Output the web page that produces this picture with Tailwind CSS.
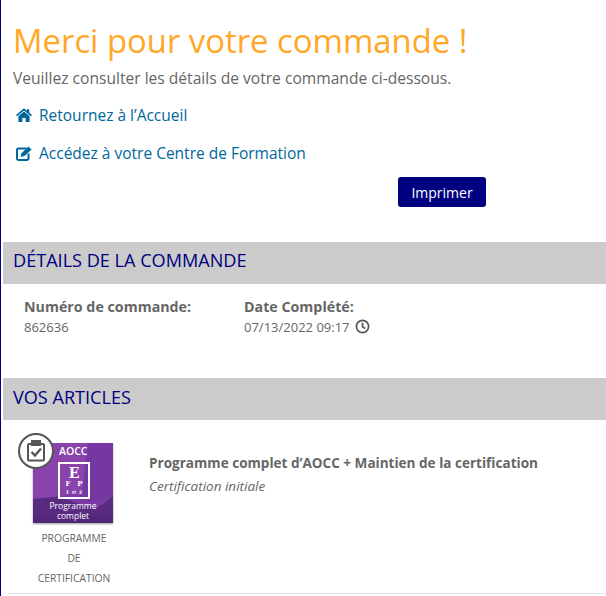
<!DOCTYPE html>
<html lang="fr">
<head>
    <meta charset="UTF-8">
    <title>Merci pour votre commande</title>
    <script src="https://cdn.jsdelivr.net/npm/@tailwindcss/browser@4"></script>
</head>
<body class="bg-white font-['Open_Sans',sans-serif] text-[#666] overflow-hidden">
    <div class="h-[596px] overflow-hidden border-l border-[#000080] pl-[2px]">
        <!-- Heading and links -->
        <div class="pl-[10px] pt-[18px]">
            <h1 class="text-[32.85px] leading-[46px] text-[#ffa726] font-medium">Merci pour votre commande !</h1>
            <p class="mt-[3px] text-[15.6px] leading-[22px]">Veuillez consulter les détails de votre commande ci-dessous.</p>
            <a class="mt-[15px] flex items-center text-[15.5px] leading-[22px] text-[#00679b]">
                <svg class="ml-[3px] mr-[7px] w-[16px] h-[14px]" viewBox="0 0 16 14" fill="#00679b"><path d="M8 0.3 L11 2.8 V1.2 H13.2 V4.6 L16 7 L15 8.2 L8 2.4 L1 8.2 L0 7 Z M8 3.4 L13.6 8 V13.2 A0.8 0.8 0 0 1 12.8 14 H9.6 V10 H6.4 V14 H3.2 A0.8 0.8 0 0 1 2.4 13.2 V8 Z"/></svg>
                Retournez à l’Accueil
            </a>
            <a class="mt-[16px] flex items-center text-[15.5px] leading-[22px] text-[#00679b]">
                <svg class="ml-[3px] mr-[7px] w-[16px] h-[15px]" viewBox="0 0 16 15" fill="none" stroke="#00679b"><path d="M10.5 2.5 H2.5 A1.5 1.5 0 0 0 1 4 V12.5 A1.5 1.5 0 0 0 2.5 14 H11 A1.5 1.5 0 0 0 12.5 12.5 V7.5" stroke-width="2"/><path d="M4.6 10.8 L5.2 7.4 L12.4 0.4 L15.6 3.4 L8.2 10.2 Z" fill="#00679b" stroke="none"/></svg>
                Accédez à votre Centre de Formation
            </a>
        </div>
        <div class="mt-[13px] pl-[395px]">
            <button class="w-[88px] h-[30px] rounded-[3px] bg-[#000080] text-white text-[14px]">Imprimer</button>
        </div>

        <!-- Order details -->
        <h2 class="mt-[35px] h-[42px] bg-[#cbcbcb] pl-[10px] text-[18.1px] leading-[36px] text-[#000080]">DÉTAILS DE LA COMMANDE</h2>
        <div class="flex pl-[21px] pt-[13px] h-[94px]">
            <div class="w-[220px]">
                <div class="text-[14.25px] leading-[20px] font-bold">Numéro de commande:</div>
                <div class="text-[13px] leading-[20px]">862636</div>
            </div>
            <div>
                <div class="text-[14.25px] leading-[20px] font-bold">Date Complété:</div>
                <div class="flex items-center text-[13px] leading-[20px]">
                    07/13/2022 09:17
                    <svg class="ml-[5px] w-[15px] h-[15px] -translate-y-[1px]" viewBox="0 0 14 14" fill="none" stroke="#555" stroke-width="1.6"><circle cx="7" cy="7" r="5.7"/><path d="M7 3.5 V7.3 L9.5 8.8"/></svg>
                </div>
            </div>
        </div>

        <!-- Items -->
        <h2 class="h-[42px] bg-[#cbcbcb] pl-[10px] text-[18.1px] leading-[38px] text-[#000080]">VOS ARTICLES</h2>
        <div class="flex">
            <div class="relative w-[142px] pl-[30px] pt-[23px]">
                <div class="relative w-[80px] h-[80px] overflow-hidden bg-[#7b3aa5] shadow-[0_1px_2px_rgba(0,0,0,0.4)] text-white">
                    <svg class="absolute inset-0 w-full h-full" viewBox="0 0 80 80"><path d="M0 0 H60 L50 50 L0 56 Z" fill="#8a42ad"/><path d="M55 0 H80 V56 L48 60 Z" fill="#7438a0"/><path d="M0 56 L26 54 L62 66 L80 54 V80 H0 Z" fill="#582a80"/><path d="M0 74 H80 V80 H0 Z" fill="#512678"/></svg>
                    <div class="absolute left-[26px] top-[1px] text-[10.5px] leading-[14px] font-semibold">AOCC</div>
                    <div class="absolute left-[25px] top-[19px] w-[32px] h-[37px] border-[2px] border-white flex flex-col items-center pt-[2px] font-['DejaVu_Serif',serif] font-bold">
                        <div class="text-[14px] leading-[14px]">E</div>
                        <div class="text-[7px] leading-[8px] flex gap-[7px]"><span>F</span><span>P</span></div>
                        <div class="mt-[2px] text-[4.5px] leading-[6px] flex gap-[3px]"><span>T</span><span>O</span><span>Z</span></div>
                    </div>
                    <div class="absolute inset-x-0 top-[58px] text-center text-[8.5px] leading-[10px]">Programme<br>complet</div>
                </div>
                <div class="absolute left-[15px] top-[13px] w-[36px] h-[36px] rounded-full bg-white border-[2px] border-[#555] flex items-center justify-center">
                    <svg class="w-[20px] h-[22px]" viewBox="0 0 20 22" fill="none" stroke="#555" stroke-width="2"><rect x="2" y="4" width="16" height="16.5" rx="1"/><rect x="6" y="1" width="8" height="4" fill="#555"/><path d="M5.5 12 L9 15.5 L15 8.5" stroke-width="2.4"/></svg>
                </div>
                <div class="mt-[5px] w-[80px] text-center text-[10.3px] leading-[20px] ml-[1px]">PROGRAMME<br>DE<br>CERTIFICATION</div>
            </div>
            <div class="pl-[4px] pt-[33px]">
                <div class="text-[13.55px] leading-[20px] font-bold">Programme complet d’AOCC + Maintien de la certification</div>
                <div class="mt-[4px] text-[13.5px] leading-[18px] italic">Certification initiale</div>
            </div>
        </div>
        <div class="mt-[5px] ml-[5px] border-t border-[#e5e5e5]"></div>
    </div>
</body>
</html>
